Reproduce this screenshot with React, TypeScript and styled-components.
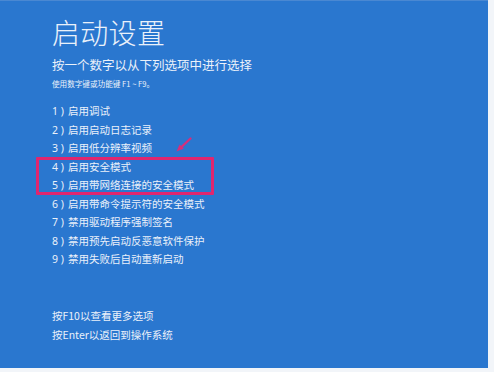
import styled, { createGlobalStyle } from "styled-components";

const GlobalStyle = createGlobalStyle`
  html, body {
    margin: 0;
    padding: 0;
    background: #f2f5f9;
  }
  body {
    width: 494px;
    height: 372px;
    overflow: hidden;
  }
`;

const options = [
  "启用调试",
  "启用启动日志记录",
  "启用低分辨率视频",
  "启用安全模式",
  "启用带网络连接的安全模式",
  "启用带命令提示符的安全模式",
  "禁用驱动程序强制签名",
  "禁用预先启动反恶意软件保护",
  "禁用失败后自动重新启动",
];

const Screen = styled.div`
  position: relative;
  width: 488px;
  height: 368px;
  box-sizing: border-box;
  padding: 14px 0 0 52px;
  background: #2a77cf;
  border-top: 1px solid #4a88d2;
  color: #eaf1fa;
  font-family: "Noto Sans CJK SC", "Noto Sans", sans-serif;
  display: flex;
  flex-direction: column;
`;

const Title = styled.h1`
  margin: 0;
  font-size: 28px;
  line-height: 35px;
  font-weight: 300;
  letter-spacing: 0.3px;
`;

const Subtitle = styled.div`
  margin-top: 6px;
  font-size: 12.5px;
  line-height: 18px;
`;

const Hint = styled.div`
  margin-top: 4px;
  font-size: 7.6px;
  line-height: 12px;
`;

const OptionList = styled.ol`
  list-style: none;
  margin: 12px 0 0;
  padding: 0;
  display: flex;
  flex-direction: column;
`;

const Option = styled.li`
  display: flex;
  font-size: 10.5px;
  line-height: 18.5px;
`;

const Num = styled.span`
  width: 16px;
  flex: none;
  font-family: "Noto Sans", "Liberation Sans", sans-serif;
`;

const Footer = styled.div`
  margin-top: 37px;
  display: flex;
  flex-direction: column;
  font-size: 10.5px;
  line-height: 19px;
`;

const Highlight = styled.div`
  position: absolute;
  left: 36px;
  top: 156px;
  width: 178px;
  height: 38px;
  box-sizing: border-box;
  border: 3px solid #e0266f;
  border-radius: 1px;
`;

const Pointer = styled.svg`
  position: absolute;
  left: 174px;
  top: 135px;
`;

export default function App() {
  return (
    <>
      <GlobalStyle />
      <Screen>
        <Title>启动设置</Title>
        <Subtitle>按一个数字以从下列选项中进行选择</Subtitle>
        <Hint>使用数字键或功能键 F1 ~ F9。</Hint>
        <OptionList>
          {options.map((label, i) => (
            <Option key={label}>
              <Num>{i + 1} )</Num>
              {label}
            </Option>
          ))}
        </OptionList>
        <Footer>
          <span>按F10以查看更多选项</span>
          <span>按Enter以返回到操作系统</span>
        </Footer>
        <Highlight />
        <Pointer width="20" height="18" viewBox="0 0 20 18">
          <path d="M16.5 2.5 L8 10.5" stroke="#d42f7c" strokeWidth="2.4" strokeLinecap="round" />
          <path d="M2.5 15.5 L5.5 8.5 L10 12.5 Z" fill="#d42f7c" />
        </Pointer>
      </Screen>
    </>
  );
}
